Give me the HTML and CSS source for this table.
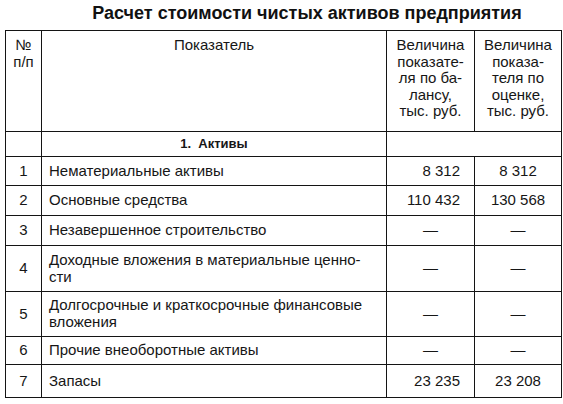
FILE: index.html
```html
<!DOCTYPE html>
<html lang="ru">
<head>
<meta charset="utf-8">
<title>Расчет стоимости чистых активов предприятия</title>
<link rel="stylesheet" href="styles.css">
</head>
<body>
<div class="page">
  <h1 class="title">Расчет стоимости чистых активов предприятия</h1>
  <table class="assets">
    <colgroup>
      <col class="c-num">
      <col class="c-name">
      <col class="c-val">
      <col class="c-val2">
    </colgroup>
    <thead>
      <tr class="head">
        <th>№<br>п/п</th>
        <th>Показатель</th>
        <th>Величина показате-<br>ля по ба-<br>лансу,<br>тыс. руб.</th>
        <th>Величина показа-<br>теля по оценке,<br>тыс. руб.</th>
      </tr>
    </thead>
    <tbody>
      <tr class="section">
        <td></td>
        <td class="sec-title">1.&nbsp; Активы</td>
        <td colspan="2"></td>
      </tr>
      <tr class="row r29">
        <td class="num">1</td>
        <td class="name">Нематериальные активы</td>
        <td class="v1">8 312</td>
        <td class="v2">8 312</td>
      </tr>
      <tr class="row r30">
        <td class="num">2</td>
        <td class="name">Основные средства</td>
        <td class="v1">110 432</td>
        <td class="v2">130 568</td>
      </tr>
      <tr class="row r30">
        <td class="num">3</td>
        <td class="name">Незавершенное строительство</td>
        <td class="dash">—</td>
        <td class="dash">—</td>
      </tr>
      <tr class="row r46">
        <td class="num">4</td>
        <td class="name">Доходные вложения в материальные ценно-<br>сти</td>
        <td class="dash">—</td>
        <td class="dash">—</td>
      </tr>
      <tr class="row r45">
        <td class="num">5</td>
        <td class="name">Долгосрочные и краткосрочные финансовые<br>вложения</td>
        <td class="dash">—</td>
        <td class="dash">—</td>
      </tr>
      <tr class="row r28">
        <td class="num">6</td>
        <td class="name">Прочие внеоборотные активы</td>
        <td class="dash">—</td>
        <td class="dash">—</td>
      </tr>
      <tr class="row r33">
        <td class="num">7</td>
        <td class="name">Запасы</td>
        <td class="v1">23 235</td>
        <td class="v2">23 208</td>
      </tr>
    </tbody>
  </table>
</div>
</body>
</html>
```

FILE: styles.css
```css
html, body {
  margin: 0;
  padding: 0;
  background: #ffffff;
}

.page {
  padding: 0 2px 0 5px;
  font-family: "Liberation Sans", Arial, sans-serif;
  color: #161616;
}

.title {
  margin: 0;
  padding: 2px 0 0 48px;
  height: 30px;
  box-sizing: border-box;
  text-align: center;
  font-size: 18px;
  line-height: 22px;
  font-weight: bold;
  color: #111;
}

.assets {
  width: 556px;
  border-collapse: collapse;
  table-layout: fixed;
  font-size: 15px;
  line-height: 16.6px;
}

.c-num { width: 36px; }
.c-name { width: 345px; }
.c-val { width: 88px; }
.c-val2 { width: 87px; }

.assets th,
.assets td {
  border: 1.5px solid #141414;
  padding: 0;
  box-sizing: border-box;
}

.assets .head th {
  height: 101px;
  font-weight: normal;
  vertical-align: top;
  text-align: center;
  padding-top: 6px;
}

.assets .section td {
  height: 25px;
  vertical-align: middle;
}

.assets .sec-title {
  text-align: center;
  font-weight: bold;
  font-size: 13px;
}

.assets .row td {
  vertical-align: middle;
}

.assets .r28 td { height: 28px; }
.assets .r29 td { height: 29px; }
.assets .r30 td { height: 30px; }
.assets .r33 td { height: 33px; }
.assets .r45 td { height: 45px; }
.assets .r46 td { height: 46px; }

.assets .num {
  text-align: center;
}

.assets .name {
  padding-left: 7px;
}

.assets .v1 {
  text-align: right;
  padding-right: 14px;
}

.assets .v2 {
  text-align: center;
}

.assets .dash {
  text-align: center;
}
```
